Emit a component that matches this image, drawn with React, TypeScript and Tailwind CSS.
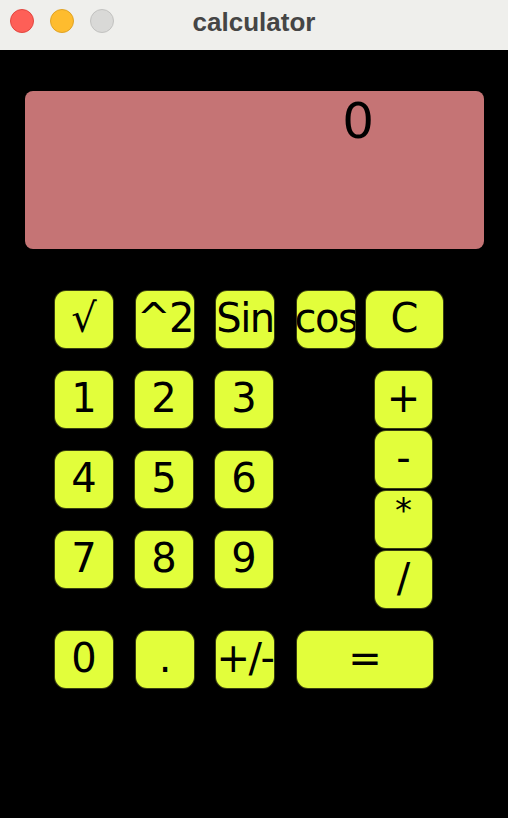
const keyCls =
  "flex items-center justify-center overflow-hidden h-[57px] rounded-[11px] bg-[#e2fe3b] text-black text-[40px] leading-none whitespace-nowrap shadow-[0_0_0_1px_#3a4010]";

const Key = ({ label, className = "" }: { label: string; className?: string }) => (
  <div className={`${keyCls} ${className}`}>
    <span className={`-mt-[3px] ${label.length > 1 ? "tracking-[-1.5px]" : ""}`}>{label}</span>
  </div>
);

const App = () => {
  return (
    <div className="w-[508px] h-[818px] bg-black flex flex-col font-['DejaVu_Sans',sans-serif]">
      {/* title bar */}
      <div className="relative h-[50px] bg-[#efefec] flex items-center shrink-0">
        <div className="flex items-center gap-[16px] ml-[10px] -mt-[8px]">
          <span className="w-[24px] h-[24px] rounded-full bg-[#fe5f57] border border-[#e2463f]" />
          <span className="w-[24px] h-[24px] rounded-full bg-[#febc2e] border border-[#e0a325]" />
          <span className="w-[24px] h-[24px] rounded-full bg-[#d9d9d7] border border-[#c2c2c0]" />
        </div>
        <div className="absolute left-0 right-0 top-[3px] text-center font-['Liberation_Sans',sans-serif] font-bold text-[26px] text-[#454545]">
          calculator
        </div>
      </div>

      {/* display */}
      <div className="ml-[25px] mt-[41px] w-[459px] h-[158px] rounded-[8px] bg-[#c57475] flex justify-end pr-[110px] pt-[5px]">
        <span className="text-[50px] leading-none text-black">0</span>
      </div>

      {/* keypad */}
      <div className="ml-[55px] mt-[42px] flex flex-col">
        <div className="flex">
          <Key label="√" className="w-[58px]" />
          <Key label="^2" className="w-[58px] ml-[23px]" />
          <Key label="Sin" className="w-[58px] ml-[22px]" />
          <Key label="cos" className="w-[58px] ml-[23px]" />
          <Key label="C" className="w-[77px] ml-[11px]" />
        </div>

        <div className="flex items-start mt-[23px]">
          <div className="grid grid-cols-[58px_58px_58px] gap-x-[22px] gap-y-[23px]">
            {["1", "2", "3", "4", "5", "6", "7", "8", "9"].map((d) => (
              <Key key={d} label={d} />
            ))}
          </div>
          <div className="ml-[102px] flex flex-col gap-[3px] w-[57px]">
            <Key label="+" />
            <Key label="-" />
            <div className={`${keyCls} items-start`}>
              <span className="text-[34px] mt-[2px]">*</span>
            </div>
            <Key label="/" />
          </div>
        </div>

        <div className="flex -mt-[0px]">
          <Key label="0" className="w-[58px] mt-[23px]" />
          <Key label="." className="w-[58px] ml-[23px] mt-[23px]" />
          <Key label="+/-" className="w-[58px] ml-[22px] mt-[23px]" />
          <Key label="=" className="w-[136px] ml-[23px] mt-[23px]" />
        </div>
      </div>
    </div>
  );
};

export default App;
